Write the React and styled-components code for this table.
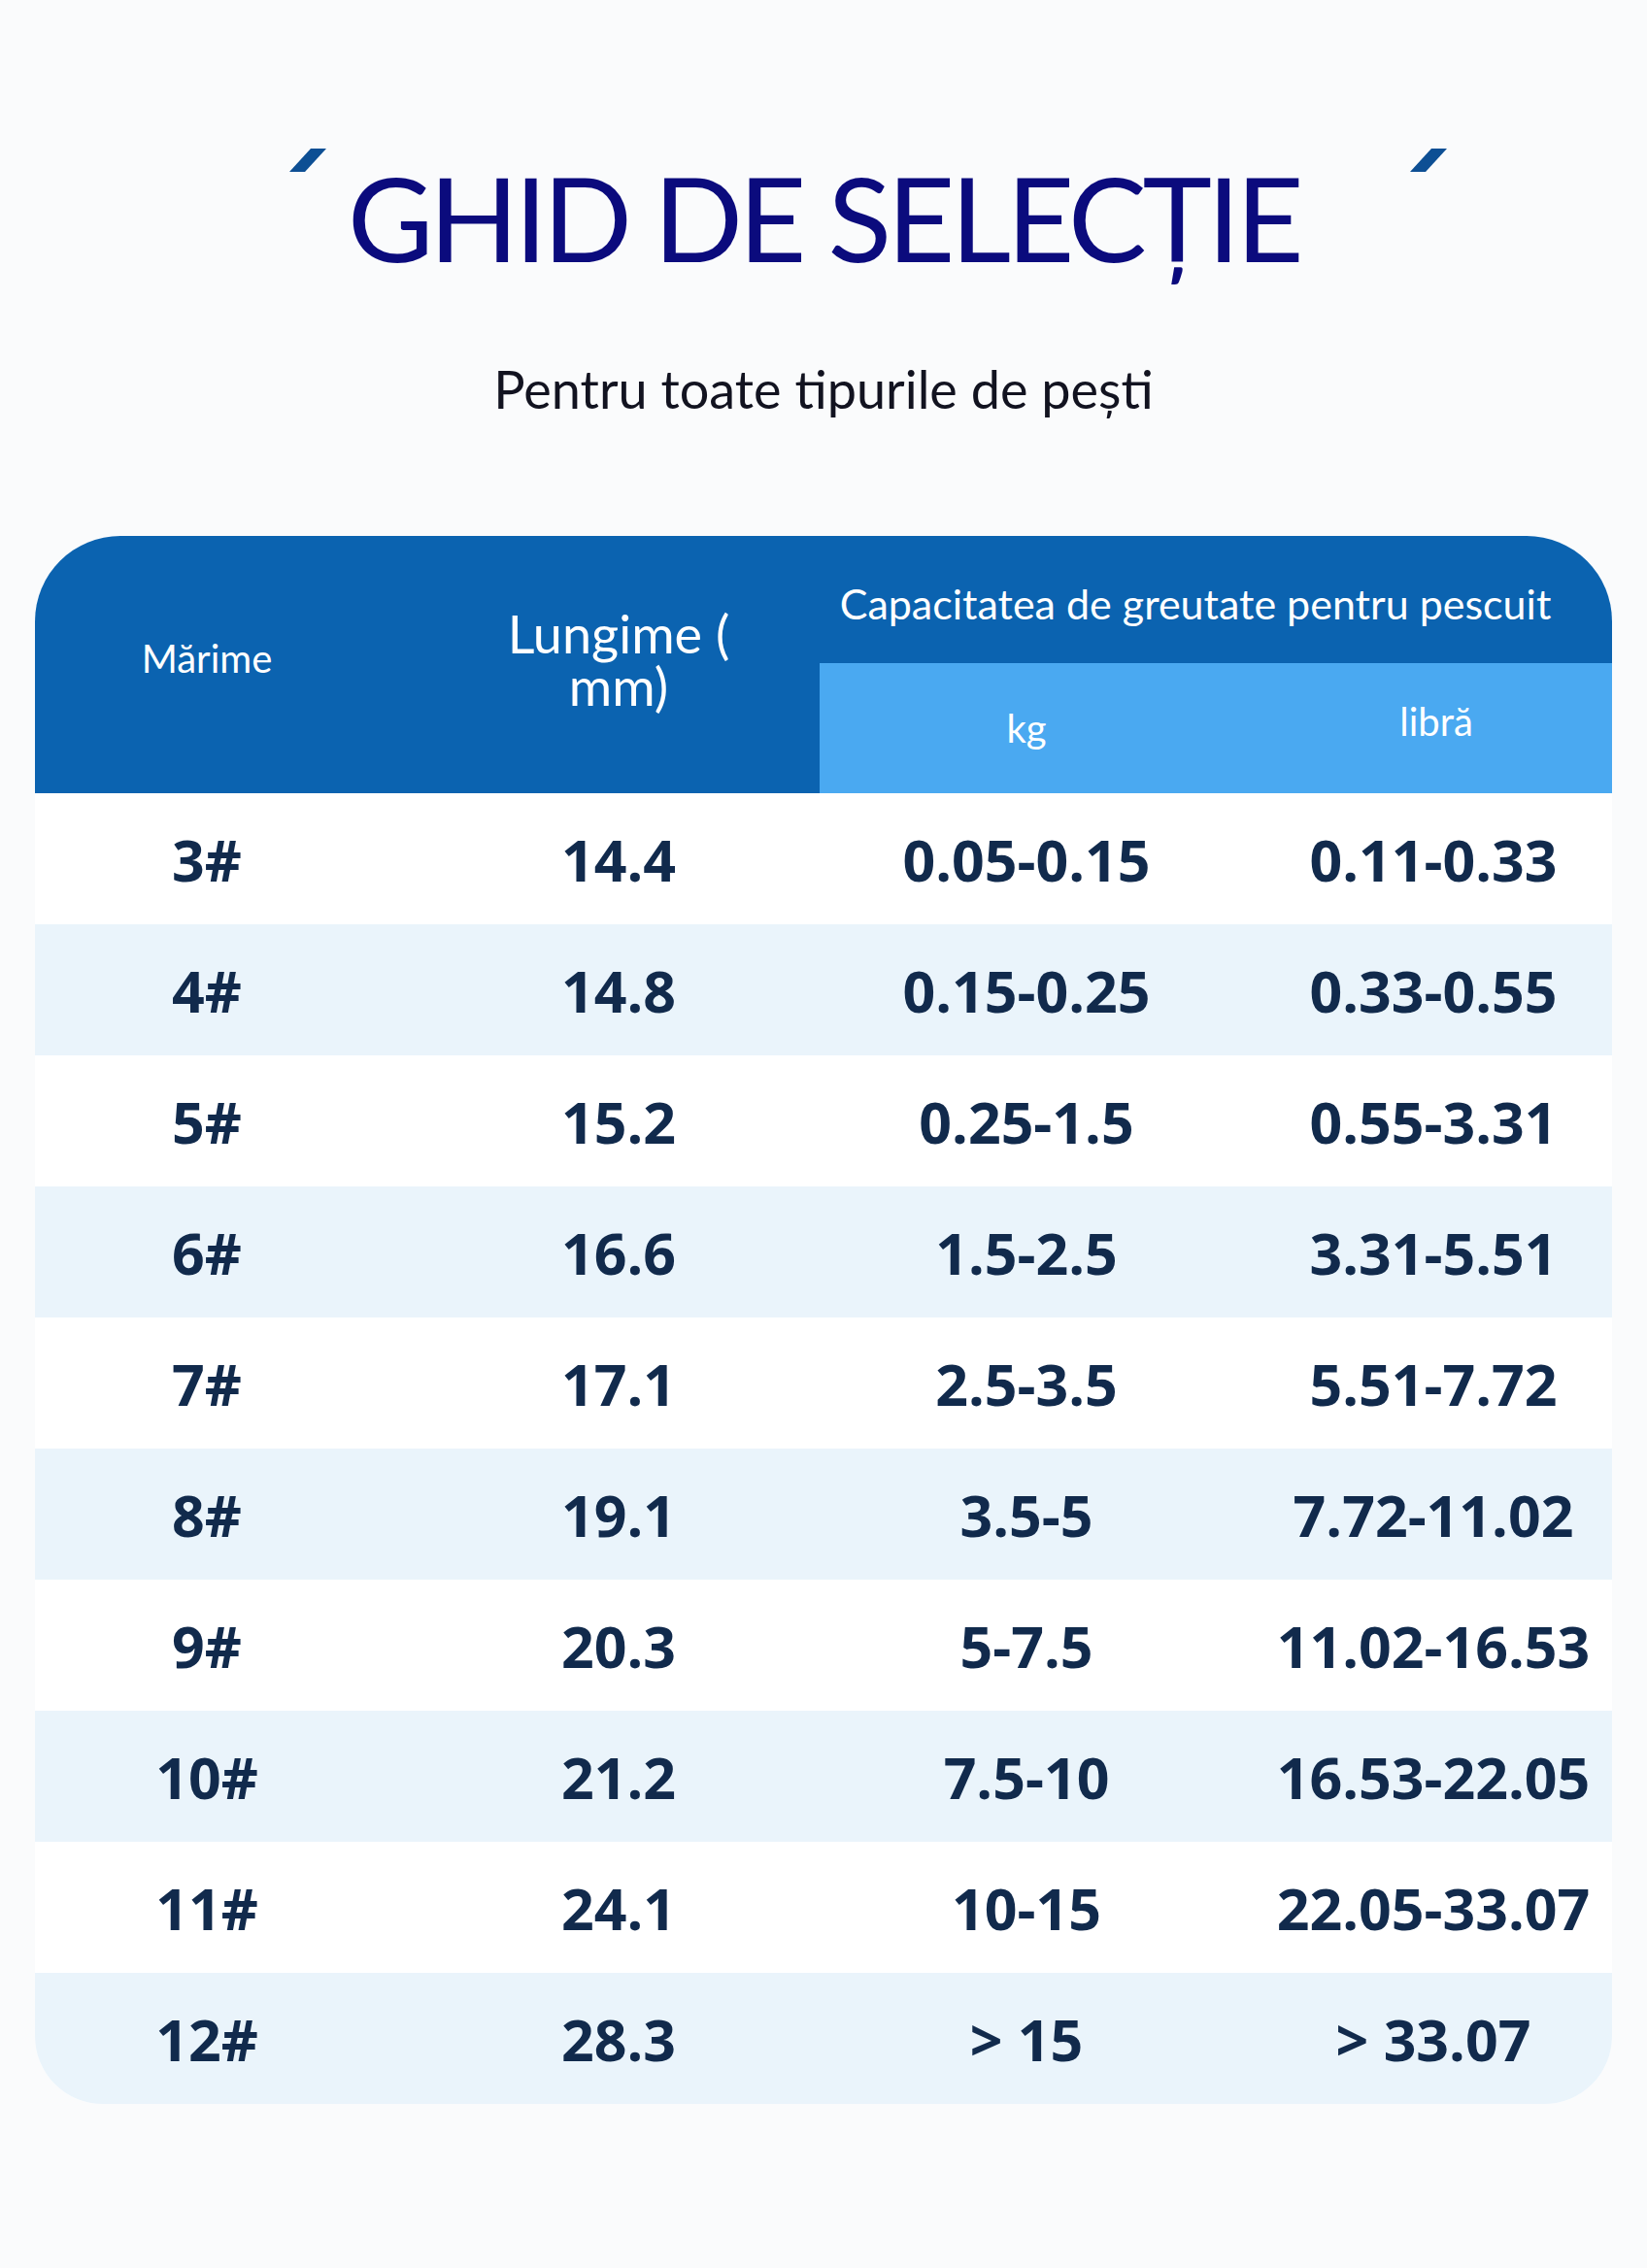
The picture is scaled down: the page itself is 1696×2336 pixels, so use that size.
import React from "react";
import styled, { createGlobalStyle } from "styled-components";

const rows = [
  ["3#", "14.4", "0.05-0.15", "0.11-0.33"],
  ["4#", "14.8", "0.15-0.25", "0.33-0.55"],
  ["5#", "15.2", "0.25-1.5", "0.55-3.31"],
  ["6#", "16.6", "1.5-2.5", "3.31-5.51"],
  ["7#", "17.1", "2.5-3.5", "5.51-7.72"],
  ["8#", "19.1", "3.5-5", "7.72-11.02"],
  ["9#", "20.3", "5-7.5", "11.02-16.53"],
  ["10#", "21.2", "7.5-10", "16.53-22.05"],
  ["11#", "24.1", "10-15", "22.05-33.07"],
  ["12#", "28.3", "> 15", "> 33.07"],
];

function Accent({ side }) {
  return (
    <AccentMark side={side} width="38" height="24" viewBox="0 0 38 24">
      <polygon points="22,0 38,0 16,24 0,24" fill="#0d4f94" />
    </AccentMark>
  );
}

export default function App() {
  return (
    <>
      <GlobalStyle />
      <Page>
        <TitleWrap>
          <Accent side="left" />
          <Title>GHID DE SELECȚIE</Title>
          <Accent side="right" />
        </TitleWrap>
        <Subtitle>Pentru toate tipurile de pești</Subtitle>

        <Table>
          <Head>
            <HeadCell area="size" pad="0 40px 14px 0" size={40}>
              Mărime
            </HeadCell>
            <HeadCell area="len" pad="0 0 10px 0" size={54} lh={54}>
              Lungime (
              <br />
              mm)
            </HeadCell>
            <HeadCell area="cap" pad="8px 42px 0 0" size={43}>
              Capacitatea de greutate pentru pescuit
            </HeadCell>
            <SubCell area="kg" pad="0">
              kg
            </SubCell>
            <SubCell area="lb" pad="0 0 14px 28px">
              libră
            </SubCell>
          </Head>
          {rows.map((r, i) => (
            <Row key={r[0]} tinted={i % 2 === 1}>
              <Cell pad="0 40px 0 0">{r[0]}</Cell>
              <Cell>{r[1]}</Cell>
              <Cell>{r[2]}</Cell>
              <Cell pad="0 0 0 22px">{r[3]}</Cell>
            </Row>
          ))}
        </Table>
      </Page>
    </>
  );
}

const GlobalStyle = createGlobalStyle`
  body {
    margin: 0;
    background: #fafbfc;
    font-family: "Lato", "Open Sans", sans-serif;
  }
`;

const Page = styled.div`
  width: 1696px;
  min-height: 2336px;
  display: flex;
  flex-direction: column;
  align-items: center;
  box-sizing: border-box;
  padding-top: 160px;
`;

const TitleWrap = styled.div`
  position: relative;
  width: 1696px;
  display: flex;
  justify-content: center;
`;

const AccentMark = styled.svg`
  position: absolute;
  top: -7px;
  left: ${(p) => (p.side === "left" ? "298px" : "1452px")};
`;

const Title = styled.h1`
  margin: 0;
  font-family: "Lato", sans-serif;
  font-weight: 400;
  font-size: 121px;
  line-height: 1;
  letter-spacing: -4.5px;
  color: #0b0b7d;
  padding-top: 3px;
`;

const Subtitle = styled.div`
  margin-top: 90px;
  font-family: "Lato", sans-serif;
  font-size: 54px;
  line-height: 1;
  color: #121320;
`;

const Table = styled.div`
  margin-top: 124px;
  width: 1624px;
  border-radius: 88px 88px 70px 70px;
  overflow: hidden;
  background: #ffffff;
`;

const Head = styled.div`
  display: grid;
  grid-template-columns: 394px 414px 426px 390px;
  grid-template-rows: 131px 134px;
  grid-template-areas:
    "size len cap cap"
    "size len kg lb";
  background: #0b63b0;
  color: #ffffff;
`;

const HeadCell = styled.div`
  grid-area: ${(p) => p.area};
  display: flex;
  align-items: center;
  justify-content: center;
  text-align: center;
  padding: ${(p) => p.pad};
  font-family: "Lato", sans-serif;
  font-size: ${(p) => p.size}px;
  line-height: ${(p) => (p.lh ? p.lh + "px" : 1.2)};
`;

const SubCell = styled.div`
  grid-area: ${(p) => p.area};
  display: flex;
  align-items: center;
  justify-content: center;
  padding: ${(p) => p.pad};
  background: #4aa9f1;
  font-family: "Lato", sans-serif;
  font-size: 40px;
`;

const Row = styled.div`
  display: grid;
  grid-template-columns: 394px 414px 426px 390px;
  height: 135px;
  background: ${(p) => (p.tinted ? "#eaf4fb" : "#ffffff")};
`;

const Cell = styled.div`
  display: flex;
  align-items: center;
  justify-content: center;
  padding: ${(p) => p.pad || "0"};
  font-family: "Open Sans", sans-serif;
  font-weight: 700;
  font-size: 59px;
  color: #112a4c;
`;
